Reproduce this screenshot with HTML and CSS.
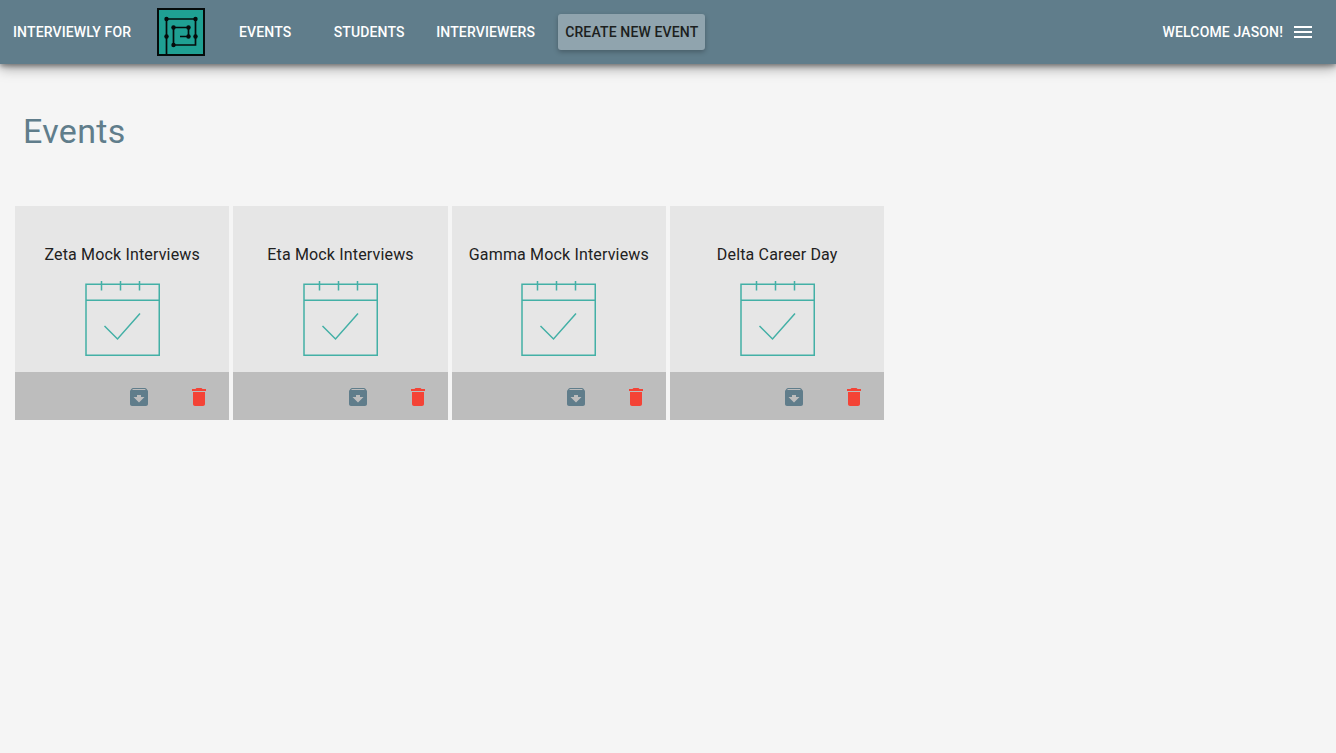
FILE: index.html
```html
<!DOCTYPE html>
<html lang="en">
<head>
<meta charset="utf-8">
<title>Interviewly</title>
<link rel="stylesheet" href="styles.css">
</head>
<body>
<svg class="sprite" aria-hidden="true">
  <symbol id="calendar" viewBox="0 0 75 75">
    <g fill="none" stroke="#26a69a" stroke-width="1.5" opacity=".85">
      <path d="M1 3.25H74.25V74.25H1ZM1 19.25H74.25M16.5 0V9.5M35.5 0V9.5M54.5 0V9.5M19.5 45 32.5 58 55 32.5"/>
    </g>
  </symbol>
  <symbol id="archive" viewBox="0 0 24 24">
    <path d="M20.54 5.23l-1.39-1.68C18.88 3.21 18.47 3 18 3H6c-.47 0-.88.21-1.16.55L3.46 5.23C3.17 5.57 3 6.02 3 6.5V19c0 1.1.9 2 2 2h14c1.1 0 2-.9 2-2V6.5c0-.48-.17-.93-.46-1.27zM12 17.500L6.500 12H10v-2h4v2h3.500L12 17.500zM5.120 5l.810-1h12l.940 1H5.120z"/>
  </symbol>
  <symbol id="trash" viewBox="0 0 24 24">
    <path d="M6 19c0 1.1.9 2 2 2h8c1.1 0 2-.9 2-2V7H6v12zM19 4h-3.500l-1-1h-5l-1 1H5v2h14V4z"/>
  </symbol>
</svg>
<header class="toolbar">
  <nav class="nav">
    <a class="nav-item" href="#">Interviewly for</a>
    <svg class="logo" viewBox="0 0 48 48" role="img" aria-label="Logo">
      <rect x="1" y="1" width="46" height="46" fill="#1fa093" stroke="#050b0b" stroke-width="2"/>
      <path d="M9.500 47V11H38.500V37H16.500V19.500H31.500V28.500H23" fill="none" stroke="#050b0b" stroke-width="1.700"/>
      <g fill="#050b0b"><circle cx="9.500" cy="11" r="2.200"/><circle cx="38.500" cy="11" r="2.200"/><circle cx="9.500" cy="28.500" r="2.200"/><circle cx="38.500" cy="28.500" r="2.200"/><circle cx="16.500" cy="19.500" r="2.200"/><circle cx="31.500" cy="19.500" r="2.200"/><circle cx="31.500" cy="28.500" r="2.200"/><circle cx="16.500" cy="37" r="2.200"/></g>
    </svg>
    <a class="nav-item" href="#">Events</a>
    <a class="nav-item" href="#">Students</a>
    <a class="nav-item" href="#">Interviewers</a>
    <button class="nav-item create" type="button">Create new event</button>
  </nav>
  <button class="nav-item account" type="button">
    Welcome Jason!
    <svg class="icon" viewBox="0 0 24 24" aria-hidden="true"><path d="M3 18h18v-2H3v2zm0-5h18v-2H3v2zm0-7v2h18V6H3z"/></svg>
  </button>
</header>
<main>
  <h1 class="title">Events</h1>
  <section class="tiles">
    <article class="tile">
      <div class="tile-body"><h2 class="tile-name">Zeta Mock Interviews</h2><svg class="calendar"><use href="#calendar"/></svg></div>
      <footer class="tile-footer">
        <button class="icon-button" type="button" aria-label="Archive"><svg class="icon"><use href="#archive"/></svg></button>
        <button class="icon-button delete" type="button" aria-label="Delete"><svg class="icon"><use href="#trash"/></svg></button>
      </footer>
    </article>
    <article class="tile">
      <div class="tile-body"><h2 class="tile-name">Eta Mock Interviews</h2><svg class="calendar"><use href="#calendar"/></svg></div>
      <footer class="tile-footer">
        <button class="icon-button" type="button" aria-label="Archive"><svg class="icon"><use href="#archive"/></svg></button>
        <button class="icon-button delete" type="button" aria-label="Delete"><svg class="icon"><use href="#trash"/></svg></button>
      </footer>
    </article>
    <article class="tile">
      <div class="tile-body"><h2 class="tile-name">Gamma Mock Interviews</h2><svg class="calendar"><use href="#calendar"/></svg></div>
      <footer class="tile-footer">
        <button class="icon-button" type="button" aria-label="Archive"><svg class="icon"><use href="#archive"/></svg></button>
        <button class="icon-button delete" type="button" aria-label="Delete"><svg class="icon"><use href="#trash"/></svg></button>
      </footer>
    </article>
    <article class="tile">
      <div class="tile-body"><h2 class="tile-name">Delta Career Day</h2><svg class="calendar"><use href="#calendar"/></svg></div>
      <footer class="tile-footer">
        <button class="icon-button" type="button" aria-label="Archive"><svg class="icon"><use href="#archive"/></svg></button>
        <button class="icon-button delete" type="button" aria-label="Delete"><svg class="icon"><use href="#trash"/></svg></button>
      </footer>
    </article>
  </section>
</main>
</body>
</html>
```
FILE: styles.css
```css
* {
  box-sizing: border-box;
}

body {
  margin: 0;
  background: #f5f5f5;
  color: #212121;
  font-family: Roboto, sans-serif;
}

.sprite {
  display: none;
}

.toolbar {
  display: flex;
  align-items: center;
  justify-content: space-between;
  height: 64px;
  padding: 0 14px 0 6px;
  background: #607d8b;
  box-shadow: 0 2px 5px rgba(0, 0, 0, .36), 0 4px 12px rgba(0, 0, 0, .36);
}

.nav {
  display: flex;
  align-items: center;
  gap: 16px;
}

.nav-item {
  min-width: 88px;
  padding: 0 7px;
  border: 0;
  border-radius: 3px;
  background: none;
  color: #fff;
  font: 500 14px/36px Roboto, sans-serif;
  letter-spacing: .01em;
  text-align: center;
  text-decoration: none;
  text-transform: uppercase;
  white-space: nowrap;
}

.create {
  background: #90a4ae;
  color: #1c1f20;
  box-shadow: 0 2px 5px rgba(0, 0, 0, .26);
}

.account {
  display: flex;
  align-items: center;
  gap: 8px;
}

.logo {
  display: block;
  width: 48px;
  height: 48px;
  margin-left: 3px;
}

.icon {
  display: block;
  width: 24px;
  height: 24px;
  fill: currentColor;
}

.title {
  margin: 0;
  padding: 47px 23px 55px;
  color: #607d8b;
  font-size: 34px;
  font-weight: 400;
  line-height: 40px;
  letter-spacing: .01em;
}

.tiles {
  display: grid;
  grid-template-columns: repeat(6, 1fr);
  gap: 4px;
  padding: 0 15px;
}

.tile {
  display: flex;
  flex-direction: column;
  aspect-ratio: 1;
  background: #e6e6e6;
}

.tile-body {
  display: flex;
  flex: 1;
  flex-direction: column;
  align-items: center;
  justify-content: flex-end;
  gap: 14px;
  padding-bottom: 16px;
}

.tile-name {
  margin: 0;
  font-size: 16px;
  font-weight: 400;
  line-height: 24px;
  letter-spacing: .01em;
}

.calendar {
  width: 75px;
  height: 75px;
}

.tile-footer {
  display: flex;
  justify-content: flex-end;
  gap: 12px;
  height: 48px;
  padding: 1px 6px 0;
  background: #bdbdbd;
}

.icon-button {
  width: 48px;
  padding: 0 12px;
  border: 0;
  background: none;
  color: #607d8b;
}

.delete {
  color: #f44336;
}
```
